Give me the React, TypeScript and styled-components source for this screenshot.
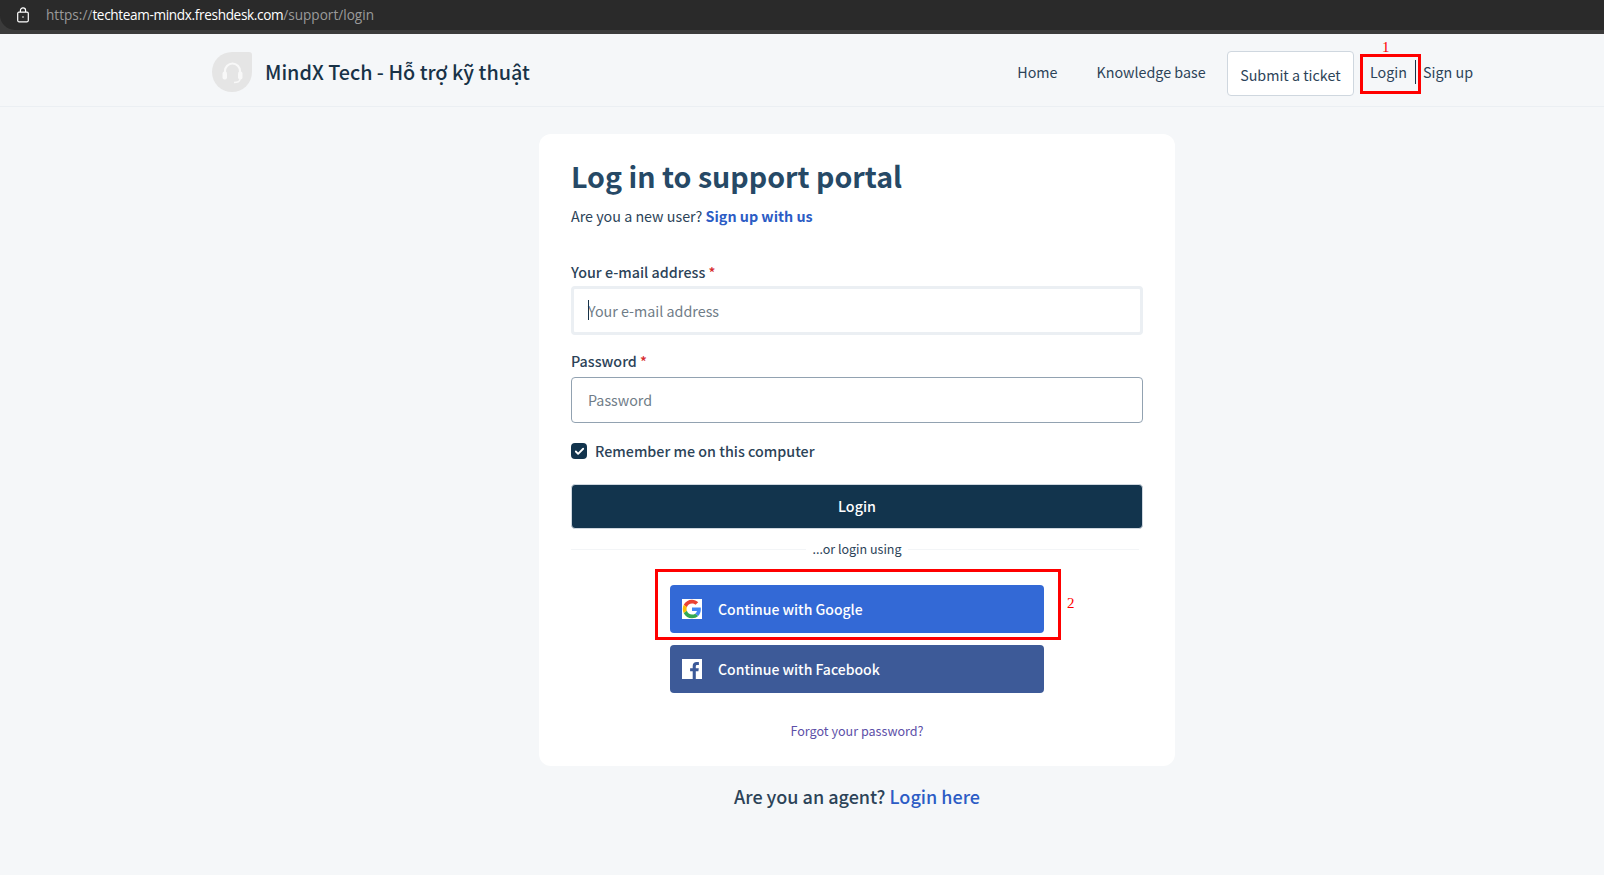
import React, { FC } from "react";
import styled, { createGlobalStyle } from "styled-components";
import { Check } from "lucide-react";

const GlobalStyle = createGlobalStyle`
  html, body {
    margin: 0;
    padding: 0;
    background: #f5f7f9;
  }
  body {
    font-family: "Noto Sans CJK SC", "Noto Sans", sans-serif;
    color: #183247;
  }
  * {
    box-sizing: border-box;
  }
`;

const Page = styled.div`
  height: 875px;
  overflow: hidden;
  display: flex;
  flex-direction: column;
`;

const UrlBar = styled.div`
  height: 34px;
  padding: 0 0 4px;
  background: #3b3b3b;
  display: flex;
`;

const UrlField = styled.div`
  flex: 1;
  padding-left: 16px;
  display: flex;
  align-items: center;
  gap: 16px;
  background: #2a2a2a;
  border-radius: 0 0 0 15px;
  font: 13.6px/20px "Open Sans", sans-serif;
  color: #9a9a9a;

  b {
    font-weight: 400;
    letter-spacing: -0.35px;
    color: #fff;
  }
`;

const Header = styled.header`
  height: 73px;
  padding: 4px 131px 0 212px;
  border-bottom: 1px solid #ebeff3;
  display: flex;
  align-items: center;
  justify-content: space-between;
`;

const Brand = styled.div`
  display: flex;
  align-items: center;
  gap: 13px;
  font-size: 19.8px;
  line-height: 30px;
  font-weight: 500;
  color: #183247;
`;

const Nav = styled.nav`
  display: flex;
  align-items: center;
  font-size: 14.3px;
  line-height: 24px;
  color: #2c4358;
`;

const NavLink = styled.span<{ $mr: number }>`
  margin-right: ${(p) => p.$mr}px;
`;

const TicketButton = styled.span`
  margin: 3px 16px 0 0;
  height: 45px;
  padding: 3px 12.5px 0;
  display: flex;
  align-items: center;
  background: #fff;
  border: 1px solid #cfd7df;
  border-radius: 4px;
`;

const LoginLink = styled.span`
  position: relative;
  padding-right: 8px;
  margin-right: 7px;
  border-right: 1px solid #183247;
`;

const AnnotationBox = styled.span<{ $top: number; $left: number; $w: number; $h: number }>`
  position: absolute;
  top: ${(p) => p.$top}px;
  left: ${(p) => p.$left}px;
  width: ${(p) => p.$w}px;
  height: ${(p) => p.$h}px;
  border: 3px solid #ff0000;
  pointer-events: none;
`;

const AnnotationNumber = styled.span<{ $top: number; $left: number }>`
  position: absolute;
  top: ${(p) => p.$top}px;
  left: ${(p) => p.$left}px;
  font: 15px/16px "Liberation Serif", serif;
  color: #ff0000;
`;

const Main = styled.main`
  flex: 1;
  padding: 27px 0 0 110px;
  display: flex;
  flex-direction: column;
  align-items: center;
`;

const Card = styled.section`
  width: 636px;
  height: 632px;
  padding: 23px 32px 0;
  background: #fff;
  border-radius: 12px;
`;

const Title = styled.h1`
  margin: 0;
  font-size: 28.6px;
  line-height: 38px;
  font-weight: 700;
  color: #264966;
`;

const SubText = styled.p`
  margin: 9px 0 0;
  font-size: 14.3px;
  line-height: 24px;
  color: #2c4358;

  a {
    font-weight: 700;
    color: #2c5cc5;
    text-decoration: none;
  }
`;

const Field = styled.div<{ $mt: number }>`
  margin-top: ${(p) => p.$mt}px;
`;

const Label = styled.label`
  display: block;
  height: 25px;
  font-size: 14.3px;
  line-height: 22px;
  font-weight: 500;
  color: #2c4358;

  i {
    font-style: normal;
    color: #d72d30;
  }
`;

const Input = styled.div<{ $focus?: boolean }>`
  position: relative;
  height: ${(p) => (p.$focus ? 49 : 46)}px;
  margin-top: ${(p) => (p.$focus ? 0 : 2)}px;
  padding: 0 ${(p) => (p.$focus ? 14 : 16)}px;
  display: flex;
  align-items: center;
  font-size: 14.3px;
  line-height: 24px;
  color: #6f7c87;
  background: #fff;
  border: ${(p) => (p.$focus ? "3px solid #ebeff3" : "1px solid #92a2b1")};
  border-radius: 4px;
`;

const Caret = styled.span`
  position: absolute;
  left: 14px;
  top: 11px;
  width: 1px;
  height: 20px;
  background: #183247;
`;

const Remember = styled.div`
  margin-top: 16px;
  display: flex;
  align-items: center;
  gap: 8px;
  font-size: 14.3px;
  line-height: 24px;
  font-weight: 500;
  color: #2c4358;
`;

const CheckMark = styled.span`
  width: 16px;
  height: 16px;
  display: flex;
  align-items: center;
  justify-content: center;
  background: #12344d;
  border-radius: 4px;
`;

const LoginButton = styled.div`
  margin-top: 21px;
  height: 45px;
  padding-bottom: 2px;
  display: flex;
  align-items: center;
  justify-content: center;
  font-size: 14.3px;
  font-weight: 500;
  color: #fff;
  background: #12344d;
  border: 1px solid #cfd7df;
  border-radius: 4px;
`;

const Divider = styled.div`
  position: relative;
  margin-top: 8px;
  height: 24px;
  display: flex;
  align-items: center;
  justify-content: center;

  &:before {
    content: "";
    position: absolute;
    left: 0;
    right: 4px;
    top: 12px;
    height: 1px;
    background: #f3f5f7;
  }

  span {
    position: relative;
    padding: 0 6px;
    background: #fff;
    font-size: 12.5px;
    line-height: 20px;
    color: #2c4358;
  }
`;

const SocialList = styled.div`
  position: relative;
  margin-top: 24px;
  display: flex;
  flex-direction: column;
  align-items: center;
  gap: 12px;
`;

const SocialButton = styled.div<{ $bg: string }>`
  width: 374px;
  height: 48px;
  padding-left: 12px;
  display: flex;
  align-items: center;
  gap: 16px;
  font-size: 14px;
  font-weight: 500;
  color: #fff;
  background: ${(p) => p.$bg};
  border-radius: 4px;
`;

const SocialIcon = styled.span`
  width: 20px;
  height: 20px;
  background: #fff;
  display: flex;
`;

const Forgot = styled.a`
  display: block;
  margin-top: 28px;
  text-align: center;
  font-size: 12.6px;
  line-height: 20px;
  color: #5d4fa8;
`;

const AgentLine = styled.div`
  margin-top: 16px;
  font-size: 18px;
  line-height: 28px;
  font-weight: 500;
  color: #2c4358;

  a {
    color: #2c5cc5;
  }
`;

const LogoBadge: FC = () => (
  <svg width="40" height="40" viewBox="0 0 40 40">
    <path d="M20 0h17a3 3 0 0 1 3 3v17a20 20 0 1 1-20-20z" fill="#e5e5e5" />
    <path d="M13 24v-5a7.500 7.500 0 0 1 15 0v5" fill="none" stroke="#f8f8f8" strokeWidth="2.2" />
    <rect x="10.500" y="19.500" width="4.500" height="8" rx="2" fill="#f8f8f8" />
    <rect x="26" y="19.500" width="4.500" height="8" rx="2" fill="#f8f8f8" />
    <path d="M28 27c0 2.500-3 3.500-6 3.500" fill="none" stroke="#f8f8f8" strokeWidth="1.400" />
  </svg>
);

const LockIcon: FC = () => (
  <svg width="14" height="16" viewBox="0 0 14 16" fill="none" stroke="#fff" strokeWidth="1.2">
    <rect x="1.700" y="5.200" width="10.600" height="9.600" rx="1.200" />
    <path d="M4.400 5V3.400a2.600 2.600 0 0 1 5.200 0V5" />
    <circle cx="7" cy="10" r="0.800" fill="#fff" stroke="none" />
  </svg>
);

const GoogleIcon: FC = () => (
  <svg width="20" height="20" viewBox="-2 -2 52 52">
    <path fill="#EA4335" d="M24 9.500c3.500 0 6.700 1.200 9.200 3.600l6.900-6.900C35.900 2.400 30.400 0 24 0 14.600 0 6.500 5.400 2.600 13.200l8 6.200C12.500 13.600 17.800 9.500 24 9.500z" />
    <path fill="#4285F4" d="M47 24.500c0-1.600-.1-3.100-.4-4.500H24v9h12.900c-.6 3-2.200 5.500-4.700 7.200l7.700 6c4.500-4.200 7.100-10.300 7.100-17.700z" />
    <path fill="#FBBC05" d="M10.600 28.600c-.5-1.400-.8-3-.8-4.600s.3-3.200.8-4.600l-8-6.200C.9 16.500 0 20.100 0 24s.9 7.500 2.600 10.800l8-6.200z" />
    <path fill="#34A853" d="M24 48c6.500 0 11.900-2.100 15.900-5.800l-7.700-6c-2.200 1.500-4.900 2.300-8.200 2.300-6.200 0-11.500-4.200-13.400-9.900l-8 6.200C6.500 42.600 14.600 48 24 48z" />
  </svg>
);

const FacebookIcon: FC = () => (
  <svg width="20" height="20" viewBox="0 0 20 20">
    <path fill="#3c5a99" d="M13.800 20v-7.700h2.600l.4-3h-3V7.400c0-.9.2-1.500 1.500-1.500h1.600V3.200c-.3 0-1.200-.1-2.300-.1-2.300 0-3.900 1.400-3.900 4v2.200H8.100v3h2.600V20z" />
  </svg>
);

const App: FC = () => {
  return (
    <Page>
      <GlobalStyle />
      <UrlBar>
        <UrlField>
          <LockIcon />
          <span>
            https://<b>techteam-mindx.freshdesk.com</b>/support/login
          </span>
        </UrlField>
      </UrlBar>
      <Header>
        <Brand>
          <LogoBadge />
          MindX Tech - Hỗ trợ kỹ thuật
        </Brand>
        <Nav>
          <NavLink $mr={39}>Home</NavLink>
          <NavLink $mr={21}>Knowledge base</NavLink>
          <TicketButton>Submit a ticket</TicketButton>
          <LoginLink>
            Login
            <AnnotationBox $top={-6} $left={-10} $w={61} $h={40} />
            <AnnotationNumber $top={-21} $left={12}>1</AnnotationNumber>
          </LoginLink>
          <span>Sign up</span>
        </Nav>
      </Header>
      <Main>
        <Card>
          <Title>Log in to support portal</Title>
          <SubText>
            Are you a new user? <a href="#">Sign up with us</a>
          </SubText>
          <Field $mt={33}>
            <Label>
              Your e-mail address <i>*</i>
            </Label>
            <Input $focus>
              <Caret />
              Your e-mail address
            </Input>
          </Field>
          <Field $mt={15}>
            <Label>
              Password <i>*</i>
            </Label>
            <Input>Password</Input>
          </Field>
          <Remember>
            <CheckMark>
              <Check size={11} color="#fff" strokeWidth={4} />
            </CheckMark>
            Remember me on this computer
          </Remember>
          <LoginButton>Login</LoginButton>
          <Divider>
            <span>...or login using</span>
          </Divider>
          <SocialList>
            <SocialButton $bg="#3369d6">
              <SocialIcon>
                <GoogleIcon />
              </SocialIcon>
              Continue with Google
            </SocialButton>
            <SocialButton $bg="#3d5a98">
              <SocialIcon>
                <FacebookIcon />
              </SocialIcon>
              Continue with Facebook
            </SocialButton>
            <AnnotationBox $top={-16} $left={84} $w={406} $h={71} />
            <AnnotationNumber $top={10} $left={496}>2</AnnotationNumber>
          </SocialList>
          <Forgot>Forgot your password?</Forgot>
        </Card>
        <AgentLine>
          Are you an agent? <a>Login here</a>
        </AgentLine>
      </Main>
    </Page>
  );
};

export default App;
